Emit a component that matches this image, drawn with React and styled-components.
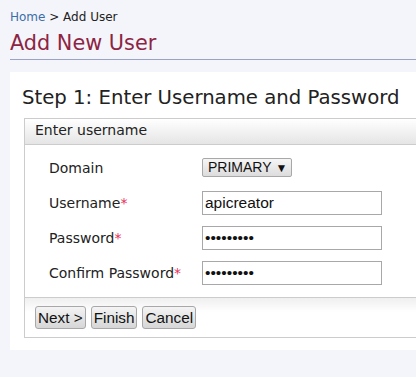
import React from "react";
import styled, { createGlobalStyle } from "styled-components";

const GlobalStyle = createGlobalStyle`
  html, body {
    margin: 0;
    padding: 0;
    background: #f4f5fa;
    font-family: "DejaVu Sans", sans-serif;
    color: #222;
  }
`;

const Page = styled.div`
  padding: 10px 0 0 10px;
  height: 377px;
  box-sizing: border-box;
  overflow: hidden;
`;

const Crumbs = styled.div`
  font-size: 12px;
  line-height: 14px;
  color: #222;
  a {
    color: #3b6ea8;
    text-decoration: none;
  }
`;

const Title = styled.h1`
  margin: 6px 0 0;
  font-size: 20.8px;
  font-weight: normal;
  line-height: 26px;
  color: #8c2443;
  padding-bottom: 3px;
  border-bottom: 1px solid #9ba3c4;
`;

const Panel = styled.div`
  margin-top: 12px;
  background: #fff;
  height: 278px;
  padding: 14px 0 0 12px;
  box-sizing: border-box;
  overflow: hidden;
`;

const StepTitle = styled.h2`
  margin: 0;
  font-size: 19.7px;
  font-weight: normal;
  line-height: 24px;
  color: #222;
`;

const Box = styled.div`
  margin-top: 8px;
  margin-left: 2px;
  width: calc(100% + 20px);
  border: 1px solid #cccccc;
`;

const BoxHeader = styled.div`
  height: 25px;
  line-height: 23px;
  padding-left: 10px;
  font-size: 14px;
  background: linear-gradient(to bottom, #ffffff, #e5e5e5);
  border-bottom: 1px solid #cccccc;
`;

const Form = styled.div`
  padding: 13px 0 12px 24px;
  display: flex;
  flex-direction: column;
  gap: 11px;
`;

const Row = styled.div`
  display: flex;
  align-items: center;
  height: ${(p) => p.$h}px;
  margin-bottom: ${(p) => p.$extra || 0}px;
`;

const Label = styled.label`
  width: 153px;
  font-size: 14px;
  color: #222;
  span {
    color: #e8305a;
  }
`;

const Select = styled.div`
  height: 19px;
  width: 90px;
  box-sizing: border-box;
  border: 1px solid #a8a8a8;
  border-radius: 2px;
  background: linear-gradient(to bottom, #f6f6f6, #dcdcdc);
  font-family: "Liberation Sans", Arial, sans-serif;
  font-size: 14px;
  line-height: 17px;
  padding-left: 5px;
  color: #111;
  small {
    font-size: 12px;
    margin-left: 4px;
  }
`;

const Input = styled.input`
  width: 180px;
  height: 24px;
  box-sizing: border-box;
  border: 1px solid #a8a8a8;
  border-radius: 0;
  padding: 0 2px;
  font-family: "Liberation Sans", Arial, sans-serif;
  font-size: 15.5px;
  color: #111;
  outline: none;
`;

const Footer = styled.div`
  border-top: 1px solid #cccccc;
  background: linear-gradient(to bottom, #efefef, #ffffff 14px);
  padding: 8px 0 8px 10px;
  display: flex;
  gap: 5px;
`;

const Button = styled.button`
  height: 23px;
  padding: 0 2px;
  border: 1px solid #a8a8a8;
  border-radius: 3px;
  background: linear-gradient(to bottom, #f4f4f4, #d6d6d6);
  font-family: "Liberation Sans", Arial, sans-serif;
  font-size: 15.3px;
  color: #111;
  line-height: 21px;
`;

export default function App() {
  return (
    <>
      <GlobalStyle />
      <Page>
        <Crumbs>
          <a href="#">Home</a> &gt; Add User
        </Crumbs>
        <Title>Add New User</Title>
        <Panel>
          <StepTitle>Step 1: Enter Username and Password</StepTitle>
          <Box>
            <BoxHeader>Enter username</BoxHeader>
            <Form>
              <Row $h={19} $extra={3}>
                <Label>Domain</Label>
                <Select>
                  PRIMARY<small>▼</small>
                </Select>
              </Row>
              <Row $h={24}>
                <Label>
                  Username<span>*</span>
                </Label>
                <Input defaultValue="apicreator" />
              </Row>
              <Row $h={24}>
                <Label>
                  Password<span>*</span>
                </Label>
                <Input type="password" defaultValue="apicreato" />
              </Row>
              <Row $h={24}>
                <Label>
                  Confirm Password<span>*</span>
                </Label>
                <Input type="password" defaultValue="apicreato" />
              </Row>
            </Form>
            <Footer>
              <Button>Next &gt;</Button>
              <Button>Finish</Button>
              <Button>Cancel</Button>
            </Footer>
          </Box>
        </Panel>
      </Page>
    </>
  );
}
